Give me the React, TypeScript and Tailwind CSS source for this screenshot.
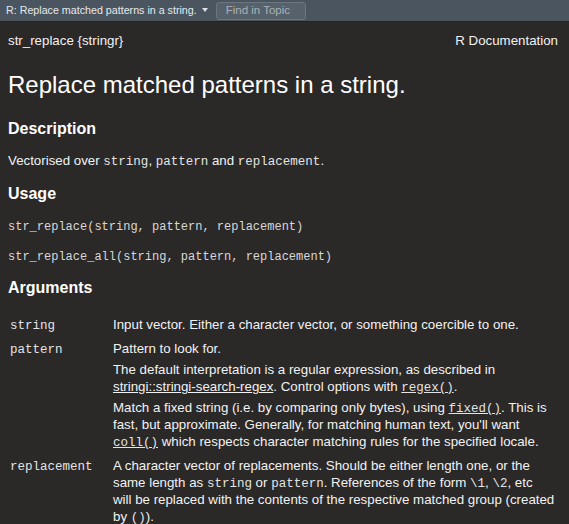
import React from 'react';

const sans = { fontFamily: '"Liberation Sans", Arial, sans-serif' };

// Inline code span in the help text
function Code({ children, link }: { children: React.ReactNode; link?: boolean }) {
  return (
    <code
      className={`font-[family-name:'Liberation_Mono','Courier_New',monospace] text-[12.5px] leading-none text-[#e4e4e4] ${link ? 'underline' : ''}`}
    >
      {children}
    </code>
  );
}

type Arg = { name: string; paras: React.ReactNode[] };

const args: Arg[] = [
  { name: 'string', paras: ['Input vector. Either a character vector, or something coercible to one.'] },
  {
    name: 'pattern',
    paras: [
      'Pattern to look for.',
      <>
        The default interpretation is a regular expression, as described in{' '}
        <span className="underline">stringi::stringi-search-regex</span>. Control options with{' '}
        <Code link>regex()</Code>.
      </>,
      <>
        Match a fixed string (i.e. by comparing only bytes), using <Code link>fixed()</Code>. This is
        fast, but approximate. Generally, for matching human text, you'll want <Code link>coll()</Code>{' '}
        which respects character matching rules for the specified locale.
      </>,
    ],
  },
  {
    name: 'replacement',
    paras: [
      <>
        A character vector of replacements. Should be either length one, or the same length as{' '}
        <Code>string</Code> or <Code>pattern</Code>. References of the form <Code>\1</Code>,{' '}
        <Code>\2</Code>, etc
        <br />
        will be replaced with the contents of the respective matched group (created
        <br />
        by <Code>()</Code>).
      </>,
    ],
  },
];

const paraGap = ['', 'mt-[4px]', 'mt-[4px]'];

export default function App() {
  return (
    <div className="h-[524px] w-[569px] overflow-hidden bg-[#2b2828]" style={sans}>
      {/* toolbar */}
      <div className="flex h-[22px] items-center border-b border-[#1c252d] bg-[#4a5560] pl-[6px]">
        <span className="text-[10.7px] text-[#e6e9ec]">R: Replace matched patterns in a string.</span>
        <svg width="6" height="4" viewBox="0 0 6 4" className="ml-[5px] mt-[-2px]">
          <path d="M0 0h6L3 4z" fill="#dde1e5" />
        </svg>
        <div className="ml-[8px] flex h-[18px] w-[90px] items-center rounded-[3px] border border-[#6a757f] bg-[#56616b] pl-[9px] text-[11.5px] text-[#a9b1b8]">
          Find in Topic
        </div>
      </div>

      <div className="px-[8px] text-[13.3px] leading-[17px] text-[#f2f2f2]">
        <div className="mt-[10px] flex justify-between pr-[3px]">
          <span>str_replace {'{stringr}'}</span>
          <span>R Documentation</span>
        </div>

        <h1 className="mt-[22px] text-[24px] leading-[28px] text-white">Replace matched patterns in a string.</h1>

        <h3 className="mt-[20px] text-[16px] font-bold leading-[20px] text-white">Description</h3>
        <p className="mt-[13px]">
          Vectorised over <Code>string</Code>, <Code>pattern</Code> and <Code>replacement</Code>.
        </p>

        <h3 className="mt-[15px] text-[16px] font-bold leading-[20px] text-white">Usage</h3>
        <pre className="mt-[15px] font-[family-name:'Liberation_Mono','Courier_New',monospace] text-[12px] leading-[16px] text-[#d8d8d8]">
          str_replace(string, pattern, replacement)
        </pre>
        <pre className="mt-[14px] font-[family-name:'Liberation_Mono','Courier_New',monospace] text-[12px] leading-[16px] text-[#d8d8d8]">
          str_replace_all(string, pattern, replacement)
        </pre>

        <h3 className="mt-[13px] text-[16px] font-bold leading-[20px] text-white">Arguments</h3>

        <div className="mt-[14px] flex flex-col">
          {args.map((a) => (
            <div key={a.name} className="flex pb-[3px] pl-[2px] pr-[4px] pt-[4px]">
              <div className="w-[103px] shrink-0">
                <Code>{a.name}</Code>
              </div>
              <div className="flex flex-col">
                {a.paras.map((p, i) => (
                  <p key={i} className={paraGap[i]}>
                    {p}
                  </p>
                ))}
              </div>
            </div>
          ))}
        </div>
      </div>
    </div>
  );
}
